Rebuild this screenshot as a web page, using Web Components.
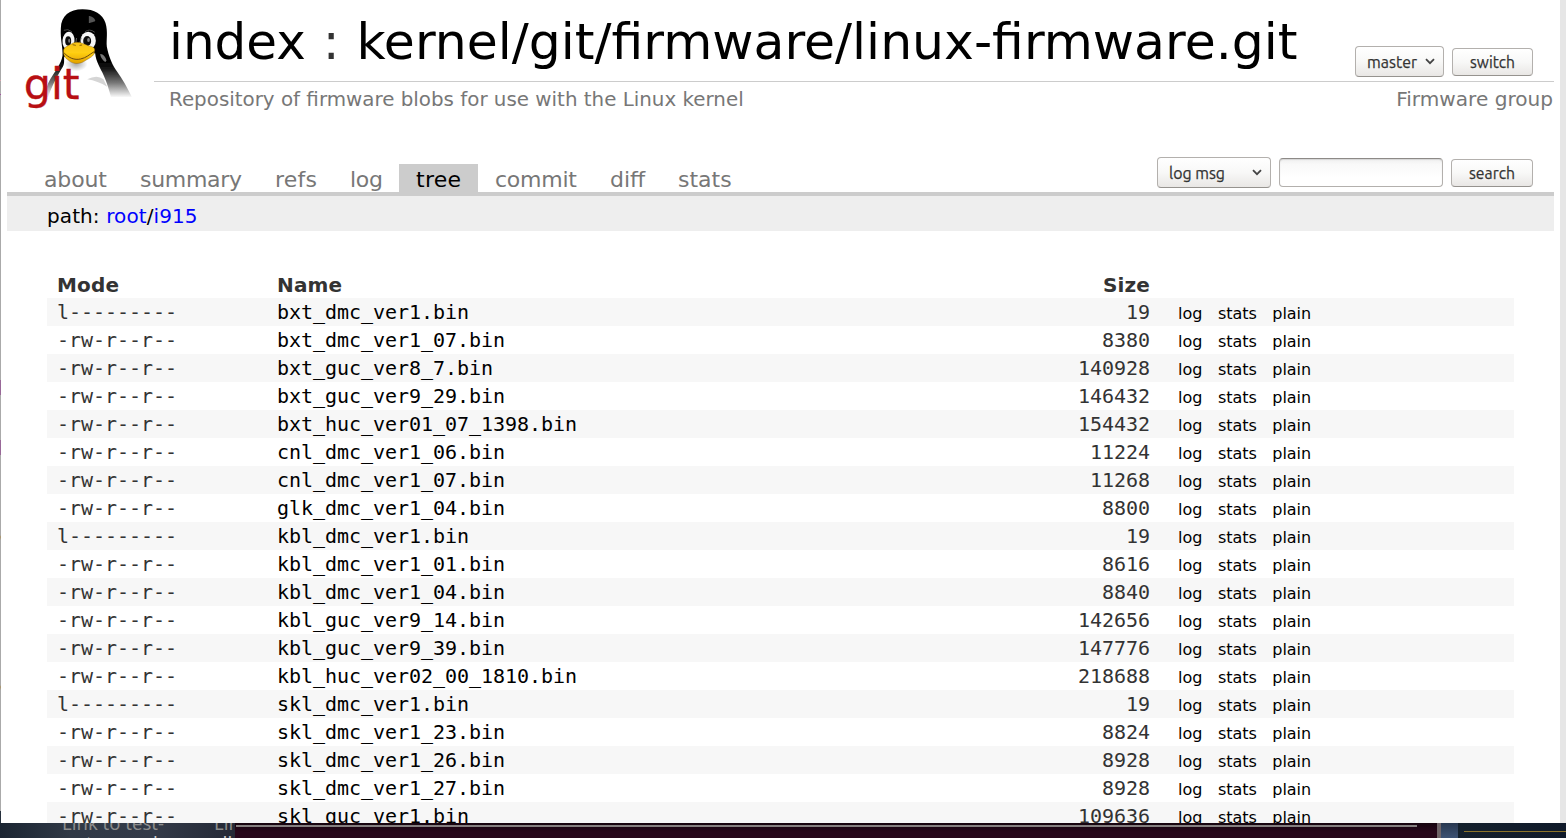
<!DOCTYPE html>
<html lang="en">
<head>
<meta charset="utf-8">
<title>linux-firmware.git</title>
<style>
html,body{margin:0;padding:0}
body{width:1566px;height:838px;overflow:hidden;background:#1b1f28;font:20px "DejaVu Sans",sans-serif;color:#333}
</style>
</head>
<body>
<cgit-app></cgit-app>
<script>
const define = (name, html) => customElements.define(name, class extends HTMLElement {
  connectedCallback() {
    if (this.shadowRoot) return;
    const root = this.attachShadow({mode: 'open'});
    const t = document.createElement('template');
    t.innerHTML = typeof html === 'function' ? html(this) : html;
    root.append(t.content.cloneNode(true));
  }
});

define('tux-logo', `
<style>:host{display:block;width:153px;height:120px}svg{display:block}</style>
<svg width="153" height="120" viewBox="3 0 459 360">
  <defs>
    <linearGradient id="b" gradientUnits="userSpaceOnUse" x1="0" y1="180" x2="0" y2="292">
      <stop offset="0" stop-color="#000"/><stop offset=".22" stop-color="#151515"/><stop offset=".6" stop-color="#777"/><stop offset="1" stop-color="#fff"/>
    </linearGradient>
    <linearGradient id="y" x1="0" y1="0" x2="0" y2="1"><stop offset="0" stop-color="#f6c21a"/><stop offset=".5" stop-color="#ffcf12"/><stop offset="1" stop-color="#e2a000"/></linearGradient>
    <radialGradient id="s"><stop offset="0" stop-color="#aaa"/><stop offset="1" stop-color="#aaa" stop-opacity="0"/></radialGradient>
    <filter id="f"><feGaussianBlur stdDeviation="2"/></filter>
    <filter id="h"><feGaussianBlur stdDeviation="1"/></filter>
  </defs>
  <g filter="url(#h)" transform="translate(1.5 1)">
  <path fill="url(#b)" d="M246 27C207 27 182 46 181 84C179 119 188 146 186 166C183 188 164 213 150 235C139 252 135 273 132 290L394 290C380 260 365 235 350 214C335 193 324 166 319 139C317 119 323 95 315 68C306 41 282 27 246 27Z"/>
  <path fill="#fff" d="M191 169L284 159C286 184 300 204 310 226C320 248 326 270 332 292L143 292C150 263 172 224 187 199C193 188 190 180 191 169Z"/>
  <ellipse cx="227" cy="191" rx="34" ry="22" fill="url(#s)"/>
  <path fill="#d5d5d5" filter="url(#f)" d="M260 237Q290 222 309 237L320 259Q292 242 260 237Z"/>
  <path fill="#555" filter="url(#f)" d="M265 46Q286 52 284 63L265 69Z"/>
  <path fill="#777" filter="url(#f)" d="M299 161Q312 160 318 181L314 185Q300 175 299 161Z"/>
  <path d="M190 90Q202 84 214 94M253 95Q267 83 283 96" fill="none" stroke="#444" stroke-width="3"/>
  <ellipse cx="204" cy="121" rx="18" ry="27" fill="#f6f6f6" transform="rotate(5 204 121)"/>
  <ellipse cx="263" cy="121" rx="23" ry="27" fill="#f6f6f6"/>
  <ellipse cx="203" cy="122" rx="9" ry="14" fill="#111"/><ellipse cx="260" cy="122" rx="12" ry="15" fill="#111"/>
  <ellipse cx="206" cy="121" rx="3" ry="6" fill="#777"/><ellipse cx="264" cy="119" rx="4" ry="6" fill="#888"/>
  <path d="M226 128L228 113M238 128L242 112" stroke="#666" stroke-width="3"/>
  <path fill="url(#y)" stroke="#7d5700" stroke-width="1.2" d="M189 151C190 139 204 137 216 129C231 121 249 130 263 136C279 139 285 144 282 153C282 169 264 174 251 183C236 193 215 191 204 180C193 173 188 164 189 151Z"/>
  <path d="M191 158C205 173 222 180 240 176C257 173 267 162 281 154" fill="none" stroke="#6c4b08" stroke-width="3"/>
  <path d="M216 133l10 2M237 135l8-1" stroke="#8d6500" stroke-width="3"/>
  </g>
  <text x="71" y="298" font-family="DejaVu Sans,sans-serif" font-size="128" fill="#b80f13" stroke="#b80f13" stroke-width="1" textLength="168" lengthAdjust="spacingAndGlyphs">git</text>
</svg>`);

/* GTK-style push button; the "menu" attribute adds a drop-down arrow. */
define('gtk-button', el => `
<style>
:host{display:flex;align-items:center;justify-content:${el.hasAttribute('menu') ? 'space-between' : 'center'};box-sizing:border-box;
 height:${el.hasAttribute('menu') ? 31 : 28}px;width:${el.getAttribute('w')}px;padding:${el.hasAttribute('menu') ? '0 8px 0 11px' : '0'};
 border:1px solid #b3b0ad;border-bottom-color:#96938f;border-radius:4px;background:linear-gradient(#fff,#f8f8f7 50%,#e9e7e5);color:#3c3c3c}
.t{display:block;width:${el.getAttribute('tw')}px;height:24px;overflow:visible}
text{font:16.5px Ubuntu,"Noto Sans",sans-serif;fill:#333;stroke:#333;stroke-width:.25px}
.a{display:block;flex:none}
</style>
<svg class="t"><text x="0" y="18" textLength="${el.getAttribute('tw')}" lengthAdjust="spacingAndGlyphs">${el.getAttribute('label')}</text></svg>
${el.hasAttribute('menu') ? '<svg class="a" width="10" height="7"><path d="M1 1.2L5 5.2L9 1.2" fill="none" stroke="#444" stroke-width="1.8"/></svg>' : ''}`);

define('gtk-entry', `<style>:host{display:block;box-sizing:border-box;width:164px;height:29px;border:1px solid #b3b0ad;border-top-color:#8d8a87;border-radius:4px;background:linear-gradient(#f0f0f0,#f9f9f9 20%,#fff 70%);box-shadow:inset 0 1px 1px #d5d5d5}</style>`);

define('repo-header', `
<style>
:host{display:flex;height:120px}
.r{flex:1;margin-right:6px}
.top{display:flex;height:81px;border-bottom:1px solid #ccc;padding:0 21px 0 15px}
h1{margin:0;flex:1;font-weight:400;font-size:50px;line-height:58px;padding-top:13px;color:#000;white-space:nowrap}
h1 span{color:#333;margin-left:1px}
h1 b{font-weight:400;font-size:50.45px;margin-left:1px}
.b{display:flex;gap:8px;align-items:center;padding-top:42px;height:39px}
.sub{display:flex;justify-content:space-between;color:#777;padding:5px 1px 0 15px;line-height:24px}
.d{font-size:19.88px;padding-top:1px}.g{font-size:20.1px}
</style>
<tux-logo></tux-logo>
<div class="r">
 <div class="top"><h1>index <span>:</span> <b>kernel/git/firmware/linux-firmware.git</b></h1>
 <div class="b"><gtk-button menu w="89" tw="50" label="master"></gtk-button><gtk-button w="81" tw="45" label="switch"></gtk-button></div></div>
 <div class="sub"><span class="d">Repository of firmware blobs for use with the Linux kernel</span><span class="g">Firmware group</span></div>
</div>`);

define('nav-tab', el => `
<style>:host{display:block;box-sizing:border-box;width:${el.getAttribute('w')}px;padding-left:17px;white-space:nowrap;height:28px;font-size:22px;letter-spacing:${el.getAttribute('ls') || 0}px;line-height:32px;color:${el.hasAttribute('active') ? '#000' : '#777'};background:${el.hasAttribute('active') ? '#ccc' : 'none'}}</style><slot></slot>`);

define('repo-tabs', `
<style>
:host{display:flex;justify-content:space-between;align-items:flex-end;box-sizing:border-box;height:76px;margin:0 6px;border-bottom:4px solid #ccc;padding:0 21px 0 20px}
.t,.s{display:flex}.s{gap:8px;align-items:center;height:39px}
</style>
<div class="t"><nav-tab w="96" ls="-.15">about</nav-tab><nav-tab w="135" ls="-.3">summary</nav-tab><nav-tab w="75" ls=".2">refs</nav-tab><nav-tab w="66" ls="-.3">log</nav-tab><nav-tab w="79" ls=".3" active>tree</nav-tab><nav-tab w="115" ls="-.25">commit</nav-tab><nav-tab w="68">diff</nav-tab><nav-tab w="87">stats</nav-tab></div>
<div class="s"><gtk-button menu w="114" tw="56" label="log msg"></gtk-button><gtk-entry></gtk-entry><gtk-button w="82" tw="46" label="search"></gtk-button></div>`);

define('path-bar', `
<style>:host{display:block;height:35px;margin:0 6px;padding-left:40px;background:#eee;line-height:40px;letter-spacing:.1px;color:#000}a{color:#00f}</style>
path: <a>root</a>/<a>i915</a>`);

define('tree-row', el => {
  const [m, n, s] = el.getAttribute('data').split(' ');
  const head = el.hasAttribute('head');
  return `
<style>
:host{display:grid;grid-template-columns:220px 560px 313px 28px 1fr;height:28px;padding-left:10px;line-height:${head ? 30 : 29}px;letter-spacing:${head ? .15 : -.041}px;
 font-family:${head ? '"DejaVu Sans"' : '"DejaVu Sans Mono",monospace'};font-weight:${head ? 700 : 400};background:${el.hasAttribute('odd') ? '#f7f7f7' : '#fff'};white-space:nowrap}
.n{color:${head ? '#333' : '#000'}}.s{text-align:right}
.l{grid-column:5;display:flex;gap:15.6px;font:16px/31px "DejaVu Sans",sans-serif;color:#000}
</style>
<span>${m}</span><span class="n">${n}</span><span class="s">${s}</span>${head ? '' : '<span class="l"><a>log</a><a>stats</a><a>plain</a></span>'}`;
});

const files = `bxt_dmc_ver1 19
bxt_dmc_ver1_07 8380
bxt_guc_ver8_7 140928
bxt_guc_ver9_29 146432
bxt_huc_ver01_07_1398 154432
cnl_dmc_ver1_06 11224
cnl_dmc_ver1_07 11268
glk_dmc_ver1_04 8800
kbl_dmc_ver1 19
kbl_dmc_ver1_01 8616
kbl_dmc_ver1_04 8840
kbl_guc_ver9_14 142656
kbl_guc_ver9_39 147776
kbl_huc_ver02_00_1810 218688
skl_dmc_ver1 19
skl_dmc_ver1_23 8824
skl_dmc_ver1_26 8928
skl_dmc_ver1_27 8928
skl_guc_ver1 109636`.split('\n').map(l => l.split(' '));

define('file-tree', () => `
<style>:host{display:block;margin:39px 46px 0}</style>
<tree-row head data="Mode Name Size"></tree-row>` + files.map(([n, s], i) =>
  `<tree-row ${i % 2 ? '' : 'odd'} data="${s === '19' ? 'l---------' : '-rw-r--r--'} ${n}.bin ${s}"></tree-row>`).join(''));

/* Sliver of desktop showing under the browser window. */
define('desktop-strip', `
<style>
:host{display:flex;height:15px;overflow:hidden;background:#1b1f28}
.w{width:235px;display:grid;grid-template-columns:62px 152px 1fr;background:linear-gradient(90deg,#1b2532,#303946 30%,#333a48 65%,#242936);font:18.5px/20px "Noto Sans",sans-serif;white-space:nowrap;overflow:hidden}
.w div{margin-top:-10px;color:#8c8c8c}
.w i{font-style:normal;display:block;padding-left:2px;color:#ccc}
.t{width:1202px;background:linear-gradient(#16050f,#27071b 9px)}
.t b{display:block;width:1181px;height:2px;margin:2px 0 0 1px;background:#858080}
.g{width:4px;background:#6e6468}.bl{width:17px;background:linear-gradient(#27374f,#3d5274)}
.d{flex:1;background:linear-gradient(90deg,#14202c,#101a2a)}.d b{display:block;margin:8px 0 0 6px;height:1px;background:#8c7429}
</style>
<div class="w"><div></div><div>Link to test-<i>net-serverk</i></div><div>Lin<i>di</i></div></div>
<div class="t"><b></b></div><div class="g"></div><div class="bl"></div><div class="d"><b></b></div>`);

define('cgit-app', `
<style>
:host{display:flex;flex-direction:column;height:838px}
.win{display:flex;height:823px;overflow:hidden}
.e{width:1px;background:linear-gradient(#aaa 80px,#d8a8b0 80px 81px,#aaa 81px 94px,#a050a0 94px 95px,#aaa 95px 380px,#986898 380px 395px,#aaa 395px 440px,#986898 440px 455px,#aaa 455px 535px,#a99468 537px,#aaa 540px 685px,#a99468 687px,#aaa 690px 811px,#26303d 811px)}
.p{width:1559px;background:#fff}.sb{width:6px;background:#e6e6e6}
</style>
<div class="win"><div class="e"></div><div class="p"><repo-header></repo-header><repo-tabs></repo-tabs><path-bar></path-bar><file-tree></file-tree></div><div class="sb"></div></div>
<desktop-strip></desktop-strip>`);
</script>
</body>
</html>
